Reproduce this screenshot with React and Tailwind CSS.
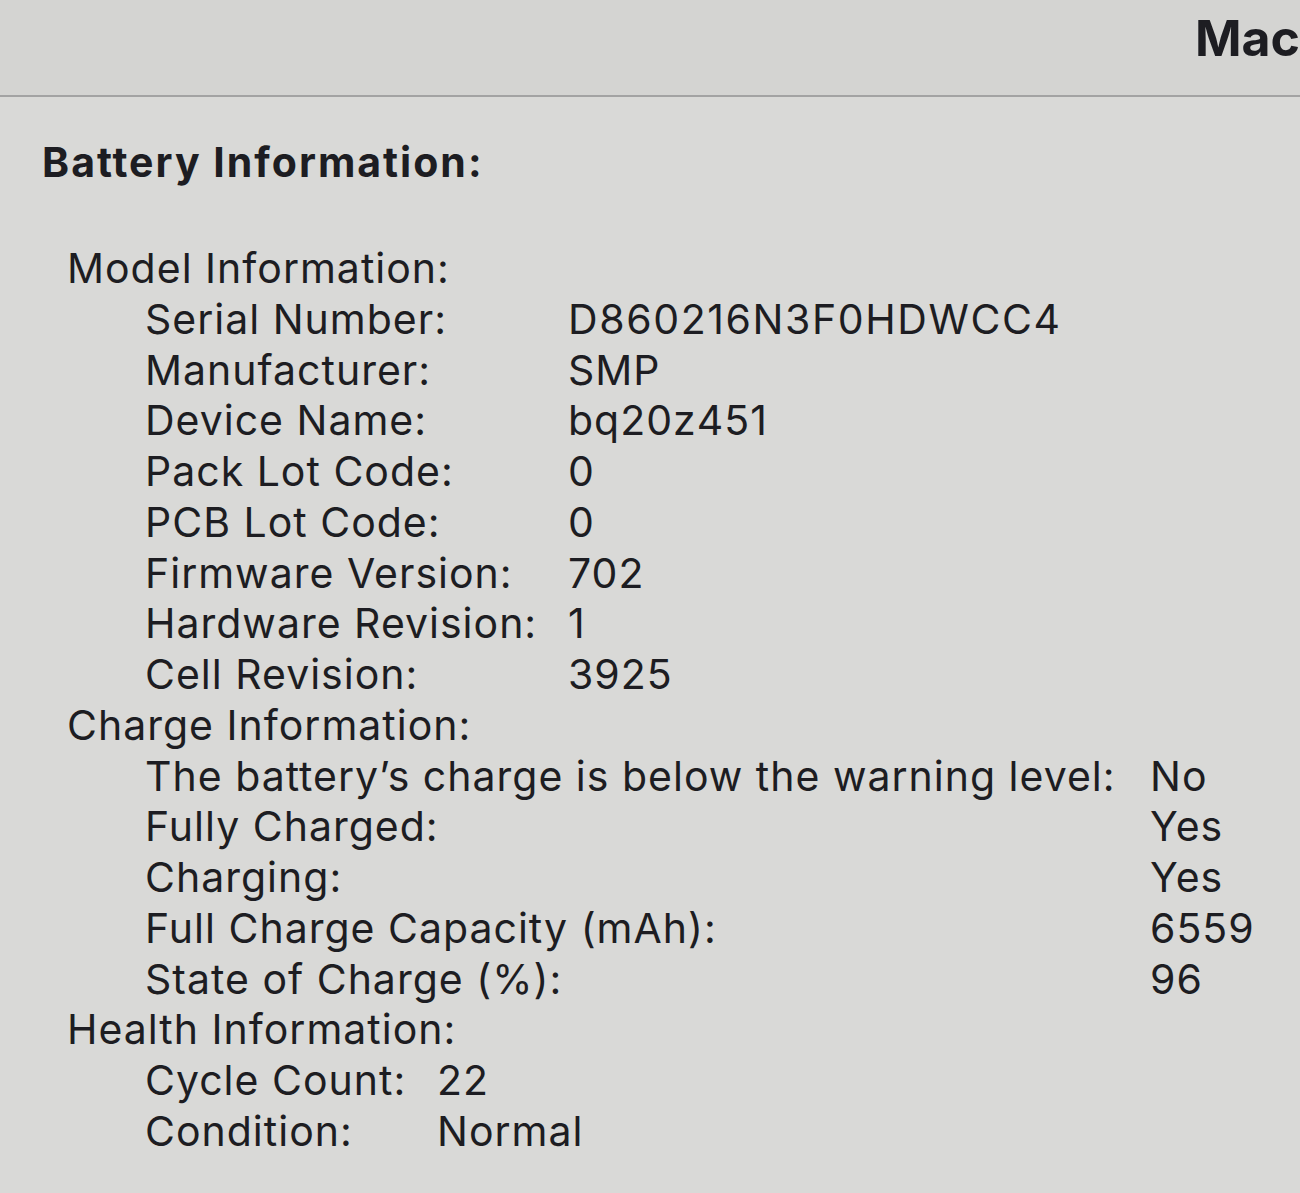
export default function App() {
  const font = { fontFamily: 'Inter, "Noto Sans", sans-serif' };
  const model = [
    ["Serial Number:", "D860216N3F0HDWCC4"],
    ["Manufacturer:", "SMP"],
    ["Device Name:", "bq20z451"],
    ["Pack Lot Code:", "0"],
    ["PCB Lot Code:", "0"],
    ["Firmware Version:", "702"],
    ["Hardware Revision:", "1"],
    ["Cell Revision:", "3925"],
  ];
  const charge = [
    ["The battery’s charge is below the warning level:", "No"],
    ["Fully Charged:", "Yes"],
    ["Charging:", "Yes"],
    ["Full Charge Capacity (mAh):", "6559"],
    ["State of Charge (%):", "96"],
  ];
  const health = [
    ["Cycle Count:", "22"],
    ["Condition:", "Normal"],
  ];
  return (
    <div className="w-[1300px] h-[1193px] overflow-hidden bg-[#d9d9d7] text-[#1d1d22]" style={font}>
      <div className="h-[97px] bg-[#d4d4d2] border-b-2 border-[#a3a3a3] flex items-start overflow-hidden whitespace-nowrap pl-[1195px] pt-[8px]">
        <span className="text-[50px] font-bold leading-[60px] tracking-[0px]">Mac</span>
      </div>
      <div className="pl-[42px] pt-[40px] text-[41px] font-bold leading-[51px] tracking-[2px]">Battery Information:</div>
      <div className="pt-[55px] text-[41px] leading-[50.75px] whitespace-nowrap tracking-[1px]">
        <div className="pl-[67px]">Model Information:</div>
        <div className="pl-[145px] grid grid-cols-[423px_1fr]">
          {model.map(([k, v]) => (
            <div key={k} className="contents">
              <div>{k}</div>
              <div className={k === "Serial Number:" ? "tracking-[1.6px]" : ""}>{v}</div>
            </div>
          ))}
        </div>
        <div className="pl-[67px]">Charge Information:</div>
        <div className="pl-[145px] grid grid-cols-[1005px_1fr]">
          {charge.map(([k, v]) => (
            <div key={k} className="contents">
              <div>{k}</div>
              <div>{v}</div>
            </div>
          ))}
        </div>
        <div className="pl-[67px]">Health Information:</div>
        <div className="pl-[145px] grid grid-cols-[292px_1fr]">
          {health.map(([k, v]) => (
            <div key={k} className="contents">
              <div>{k}</div>
              <div>{v}</div>
            </div>
          ))}
        </div>
      </div>
    </div>
  );
}
